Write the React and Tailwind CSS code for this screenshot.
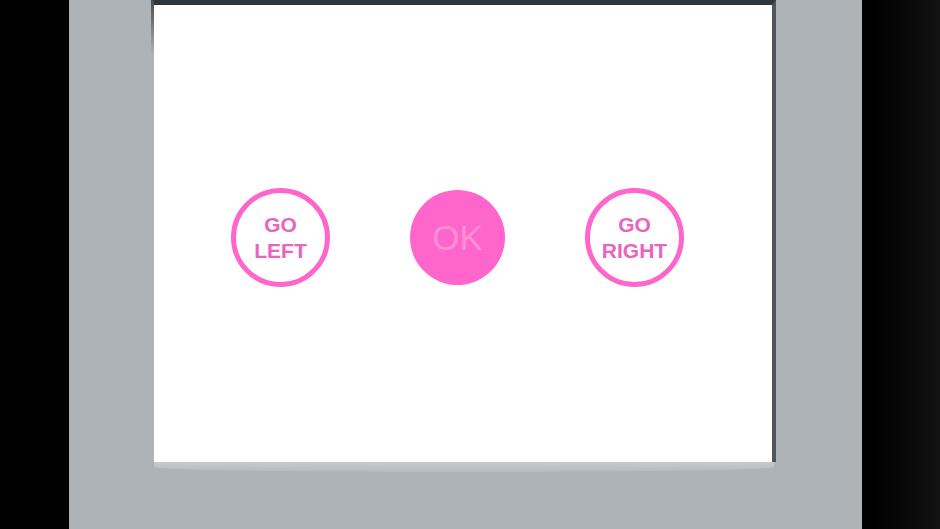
import React from "react";

function Ring({ lines }) {
  return (
    <div className="flex h-[99px] w-[99px] shrink-0 flex-col items-center justify-center rounded-full border-[5px] border-[#ff66cc] bg-white">
      {lines.map((t) => (
        <span
          key={t}
          className="text-[21px] font-bold leading-[26px] text-[#e864bd]"
          style={{ fontFamily: '"Liberation Sans", Arial, sans-serif' }}
        >
          {t}
        </span>
      ))}
    </div>
  );
}

export default function App() {
  return (
    <div className="flex h-[529px] w-[940px] overflow-hidden bg-[linear-gradient(90deg,#000_0%,#000_93%,#121212_100%)]">
      <div className="ml-[69px] flex h-full w-[793px] flex-col bg-[#adb3b6]">
        {/* screen */}
        <div className="relative ml-[85px] h-[462px] w-[622px]">
          <div className="h-full w-full border-r-[4px] border-t-[5px] border-r-[#4f565b] border-t-[#2e353b] bg-white">
            <div className="flex h-full flex-col">
              <div className="mt-[183px] flex items-center pl-[77px]">
                <Ring lines={["GO", "LEFT"]} />
                <div
                  className="ml-[80px] flex h-[95px] w-[95px] shrink-0 items-center justify-center rounded-full bg-[#ff66cc] text-[35px] leading-none text-[#ff8fd9]"
                  style={{ fontFamily: '"Liberation Sans", Arial, sans-serif' }}
                >
                  OK
                </div>
                <div className="ml-[80px]">
                  <Ring lines={["GO", "RIGHT"]} />
                </div>
              </div>
            </div>
          </div>
          {/* bezel overhang shadow at the upper left */}
          <div className="absolute left-[-3px] top-0 h-[55px] w-[3px] bg-[linear-gradient(180deg,#454e54,#adb3b6)]" />
        </div>
        {/* lower lip shading */}
        <div className="ml-[85px] h-[10px] w-[620px] rounded-b-[50%] bg-[linear-gradient(180deg,#c6cbd0,#b4babd)]" />
      </div>
    </div>
  );
}
